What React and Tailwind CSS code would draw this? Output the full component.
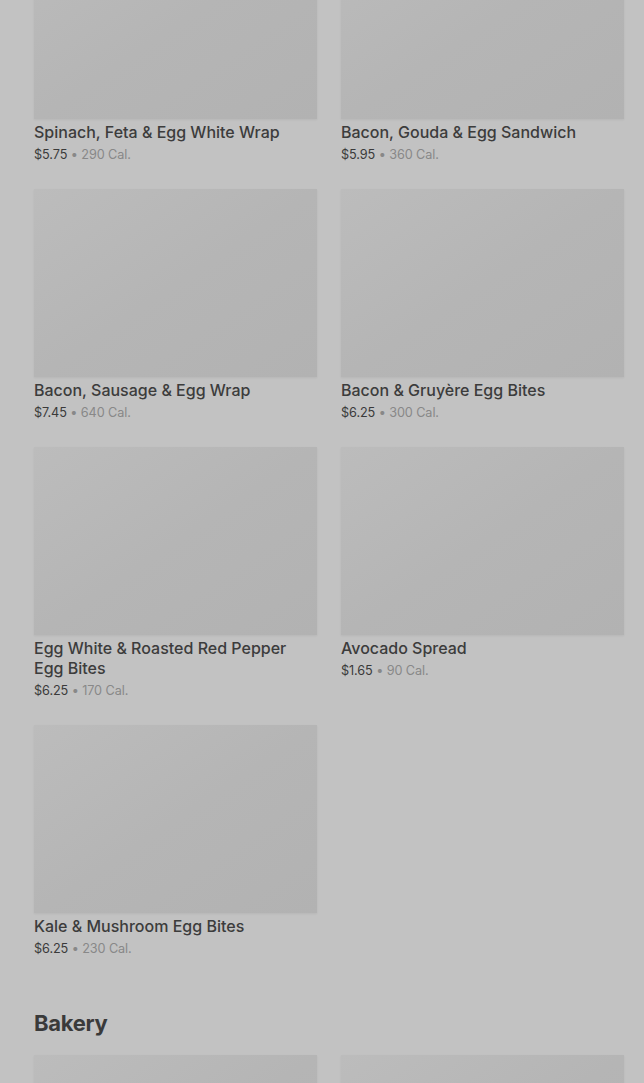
const items = [
  { name: "Spinach, Feta & Egg White Wrap", price: "$5.75", cal: "290 Cal." },
  { name: "Bacon, Gouda & Egg Sandwich", price: "$5.95", cal: "360 Cal." },
  { name: "Bacon, Sausage & Egg Wrap", price: "$7.45", cal: "640 Cal." },
  { name: "Bacon & Gruyère Egg Bites", price: "$6.25", cal: "300 Cal." },
  { name: "Egg White & Roasted Red Pepper Egg Bites", price: "$6.25", cal: "170 Cal." },
  { name: "Avocado Spread", price: "$1.65", cal: "90 Cal." },
  { name: "Kale & Mushroom Egg Bites", price: "$6.25", cal: "230 Cal." },
];

const MenuCard = ({ item }) => (
  <div className="flex flex-col">
    <div className="h-[188px] w-full bg-gradient-to-br from-[#bcbcbc] via-[#b5b5b5] to-[#b2b2b2] shadow-[0_1px_2px_rgba(0,0,0,0.06)]" />
    {item && (
      <>
        <h3 className="mt-[3px] text-[16px] leading-5 font-medium text-[#3c3c3c]">{item.name}</h3>
        <p className="mt-[3px] text-[12.7px] leading-5 tracking-[-0.1px] text-[#3a3a3a]">
          {item.price} <span className="text-[#888]">• {item.cal}</span>
        </p>
      </>
    )}
  </div>
);

const App = () => {
  return (
    <div className="h-[1083px] overflow-hidden bg-[#c2c2c2] font-['Inter',sans-serif]">
      <div className="-mt-[69px] px-[34px] pr-[20px]">
        <div className="grid grid-cols-2 gap-x-6 gap-y-[24px]">
          {items.map((it) => (
            <MenuCard key={it.name} item={it} />
          ))}
        </div>
        <h2 className="mt-[50px] mb-[18px] text-[22px] leading-7 font-bold tracking-[-0.3px] text-[#3a3a3a]">Bakery</h2>
        <div className="grid grid-cols-2 gap-x-6">
          <MenuCard />
          <MenuCard />
        </div>
      </div>
    </div>
  );
};

export default App;
